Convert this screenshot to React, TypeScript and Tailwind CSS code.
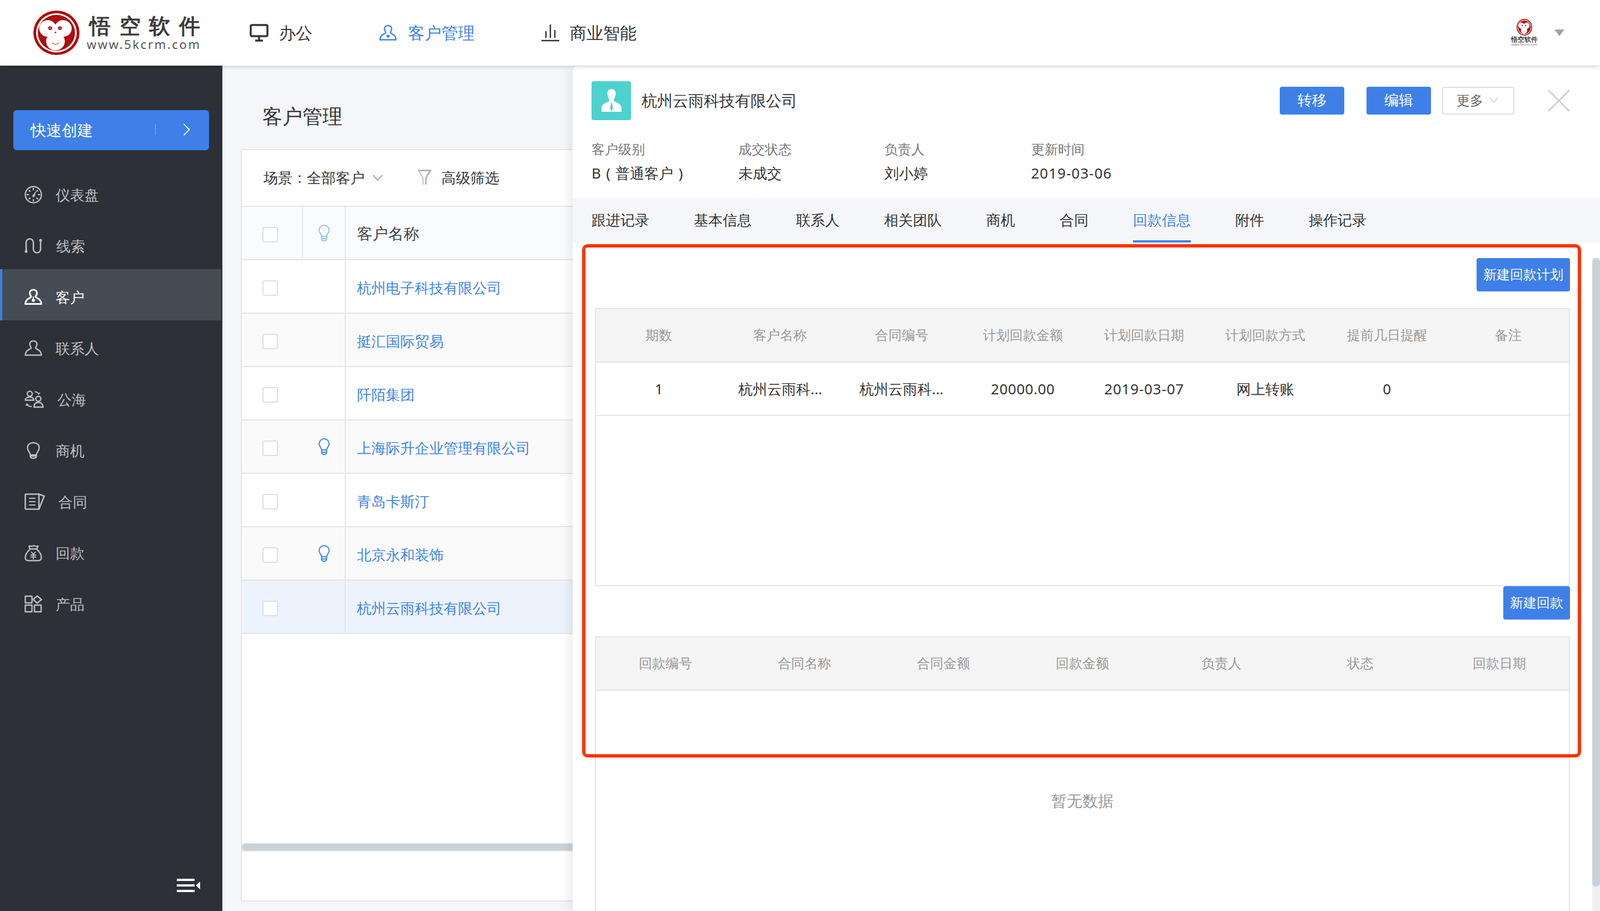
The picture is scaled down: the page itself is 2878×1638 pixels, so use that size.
import type { ReactNode } from "react";

const customers = [
  { name: "杭州电子科技有限公司", bulb: false },
  { name: "挺汇国际贸易", bulb: false },
  { name: "阡陌集团", bulb: false },
  { name: "上海际升企业管理有限公司", bulb: true },
  { name: "青岛卡斯汀", bulb: false },
  { name: "北京永和装饰", bulb: true },
  { name: "杭州云雨科技有限公司", bulb: false },
];

const planHeads = ["期数", "客户名称", "合同编号", "计划回款金额", "计划回款日期", "计划回款方式", "提前几日提醒", "备注"];
const planRow = ["1", "杭州云雨科...", "杭州云雨科...", "20000.00", "2019-03-07", "网上转账", "0", ""];
const backHeads = ["回款编号", "合同名称", "合同金额", "回款金额", "负责人", "状态", "回款日期"];
const tabs = ["跟进记录", "基本信息", "联系人", "相关团队", "商机", "合同", "回款信息", "附件", "操作记录"];
const infos = [
  ["客户级别", "B ( 普通客户 )"],
  ["成交状态", "未成交"],
  ["负责人", "刘小婷"],
  ["更新时间", "2019-03-06"],
];

// 悟空 logo
function Monkey({ className }: { className: string }) {
  return (
    <svg viewBox="42 27 236 236" className={className} preserveAspectRatio="none">
      <circle cx="160" cy="145" r="118" fill="#b00d0d" />
      <circle cx="160" cy="145" r="104" fill="#fff" />
      <circle cx="160" cy="145" r="95" fill="#b00d0d" />
      <circle cx="116" cy="122" r="44" fill="#fff" />
      <circle cx="194" cy="122" r="44" fill="#fff" />
      <circle cx="155" cy="190" r="48" fill="#fff" />
      <rect x="125" y="110" width="60" height="60" fill="#fff" />
      <circle cx="128" cy="120" r="10" fill="#b00d0d" />
      <circle cx="178" cy="120" r="10" fill="#b00d0d" />
      <circle cx="128" cy="120" r="3" fill="#fff" />
      <circle cx="178" cy="120" r="3" fill="#fff" />
      <circle cx="155" cy="143" r="4" fill="#b00d0d" />
      <path d="M138 198 Q155 214 172 198" fill="none" stroke="#b00d0d" strokeWidth="3" />
    </svg>
  );
}

function Svg({ w, h, children, className }: { w: number; h: number; children: ReactNode; className?: string }) {
  return (
    <svg
      viewBox={`0 0 ${w} ${h}`}
      width={w}
      height={h}
      fill="none"
      stroke="currentColor"
      strokeWidth="2.4"
      strokeLinecap="round"
      strokeLinejoin="round"
      className={className ?? "shrink-0"}
    >
      {children}
    </svg>
  );
}

const personPath =
  "M16 3c-4 0-6.500 2.600-6.500 6 0 2.300 1 3.600 2 5 .6.900.5 2-.5 2.800C8 19 2 20 1.500 28.500h29C30 20 24 19 21 16.800c-1-.8-1.100-1.900-.5-2.800 1-1.400 2-2.700 2-5 0-3.400-2.500-6-6.500-6Z";

const icons: Record<string, ReactNode> = {
  仪表盘: (
    <Svg w={32} h={32}>
      <circle cx="16" cy="16" r="14.500" />
      <path d="M16 5v2M16 25v2M5 16h2M25 16h2M8.500 8.500l1.400 1.400M22.100 22.100l1.400 1.400M8.500 23.500l1.400-1.400M23.500 8.500l-1.400 1.400" />
      <path d="M14 18.500 20.500 10.500 17.500 20Z" fill="currentColor" strokeWidth="1" />
    </Svg>
  ),
  线索: (
    <Svg w={33} h={32} className="shrink-0">
      <path d="M3 26V10a6.500 6.500 0 0 1 13 0v12a6.500 6.500 0 0 0 13 0V6" strokeWidth="2.600" />
      <circle cx="3" cy="26" r="2.600" fill="currentColor" stroke="none" />
      <circle cx="29" cy="6" r="2.600" fill="currentColor" stroke="none" />
    </Svg>
  ),
  客户: (
    <Svg w={32} h={32}>
      <path d={personPath} strokeWidth="3" />
      <circle cx="16" cy="22" r="2.800" fill="currentColor" stroke="none" />
      <path d="M16 16v4" />
    </Svg>
  ),
  联系人: (
    <Svg w={32} h={32}>
      <path d={personPath} />
    </Svg>
  ),
  公海: (
    <Svg w={35} h={32}>
      <circle cx="9.500" cy="6" r="4.500" />
      <path d="M1.500 17.500c0-3.600 3.500-5.500 8-5.500s7 1.500 7.500 5.500Z" />
      <circle cx="25" cy="15" r="4.500" />
      <path d="M17 30c.3-6 3.500-8.500 8-8.500s8 2.500 8.500 8.500Z" />
      <path d="M19 2.500c3 0 5.500 1.500 6.500 4M24 4.500l1.500 2 2-1.500" strokeWidth="2" />
      <path d="M12.500 29c-4 0-7-1-8.500-4.500M3 27l1-2.500 2.500 1" strokeWidth="2" />
    </Svg>
  ),
  商机: (
    <Svg w={32} h={32}>
      <path d="M10.500 24c0-5-5-6.500-5-13 0-5.500 4.500-9 10.500-9s10.500 3.500 10.500 9c0 6.500-5 8-5 13Z" />
      <path d="M10.500 24v2c0 2.500 2 4 5.500 4s5.500-1.500 5.500-4v-2M11 26h10" />
    </Svg>
  ),
  合同: (
    <Svg w={37} h={32}>
      <path d="M26 2.500H3A1.500 1.500 0 0 0 1.500 4v24A1.500 1.500 0 0 0 3 29.500h23" strokeWidth="2.600" />
      <path d="M26 2.500 35.500 6 26 29.500Z" strokeWidth="2.600" />
      <path d="M9 10h10M9 16h10M9 22h10" strokeWidth="2" />
    </Svg>
  ),
  回款: (
    <Svg w={32} h={32}>
      <path d="M10 9 8 4.500c2-1.500 3.500-.5 5-.5s3-1.500 5.500-.5 3.500.5 6 .5L22 9" />
      <path d="M10.500 9h11C26 13 30.500 18 30.500 24c0 4-2 6-5.500 6H7c-3.500 0-5.500-2-5.500-6 0-6 4.500-11 9-15Z" />
      <path d="M12.500 14.500 16 19l3.500-4.500M11.500 20h9M11.500 23.500h9M16 19v8" strokeWidth="2" />
    </Svg>
  ),
  产品: (
    <Svg w={32} h={32}>
      <rect x="1.500" y="2" width="12" height="12" />
      <path d="M23 1.500 30.500 8 23 14.500 15.500 8Z" />
      <rect x="1.500" y="18" width="12" height="12" />
      <rect x="18" y="18" width="12" height="12" />
    </Svg>
  ),
};

const menus = ["仪表盘", "线索", "客户", "联系人", "公海", "商机", "合同", "回款", "产品"];

function Bulb({ className }: { className: string }) {
  return (
    <svg viewBox="0 0 20 30" width="20" height="30" fill="none" stroke="currentColor" strokeWidth="2" className={className}>
      <path d="M5.500 21c0-4-4.500-6-4.500-11C1 5 5 1 10 1s9 4 9 9c0 5-4.500 7-4.500 11Z" />
      <path d="M5.500 21v4c0 2.500 2 4 4.500 4s4.500-1.500 4.500-4v-4M6 25h8" />
    </svg>
  );
}

function CheckBox() {
  return <div className="w-[28px] h-[28px] bg-white border-2 border-[#dcdfe6] rounded-[4px]" />;
}

function Chevron({ className }: { className: string }) {
  return (
    <svg viewBox="0 0 20 12" fill="none" stroke="currentColor" strokeWidth="1.500" className={className}>
      <path d="M1 1l9 10 9-10" />
    </svg>
  );
}

function BlueButton({ children, className }: { children: ReactNode; className: string }) {
  return (
    <button className={`bg-[#3e80e8] text-white rounded-[4px] text-center pb-[3px] ${className}`}>{children}</button>
  );
}

export default function App() {
  return (
    <div className="relative w-[2878px] h-[1638px] overflow-hidden flex flex-col bg-[#f5f6f9] text-[#333] font-['Noto_Sans_CJK_SC',sans-serif]">
      {/* 顶部导航 */}
      <header className="relative z-20 h-[118px] shrink-0 bg-white flex items-center pl-[60px] pr-[64px] shadow-[0_2px_8px_rgba(0,0,0,0.16)]">
        <Monkey className="w-[83px] h-[80px] shrink-0" />
        <div className="ml-[13px] w-[210px] mb-[4px] flex flex-col">
          <span className="text-[38px] leading-[44px] font-bold tracking-[15.500px] text-[#3a3a3a] pl-[5px] whitespace-nowrap">悟空软件</span>
          <span className="text-[22px] leading-[24px] tracking-[2.600px] text-[#555] font-['Liberation_Sans',sans-serif] whitespace-nowrap">www.5kcrm.com</span>
        </div>
        <nav className="ml-[83px] flex items-center gap-[120px] text-[30px] leading-[40px]">
          <div className="flex items-center gap-[19px]">
            <svg viewBox="0 0 34 32" width="34" height="32" fill="none" stroke="currentColor" strokeWidth="3.500">
              <rect x="2" y="2" width="30" height="20" rx="2" />
              <path d="M17 22v7M10 30h14" />
            </svg>
            <span>办公</span>
          </div>
          <div className="flex items-center gap-[20px] text-[#3e84e9]">
            <Svg w={32} h={32}>
              <path d={personPath} />
              <circle cx="16" cy="22" r="2.800" fill="currentColor" stroke="none" />
            </Svg>
            <span>客户管理</span>
          </div>
          <div className="flex items-center gap-[19px]">
            <svg viewBox="0 0 32 32" width="32" height="32" fill="none" stroke="currentColor" strokeWidth="2.400">
              <path d="M0 30h32M8 25v-12M16 25V1M24 25V11" />
            </svg>
            <span>商业智能</span>
          </div>
        </nav>
        <div className="ml-auto flex items-center gap-[23px]">
          <div className="w-[62px] h-[50px] flex flex-col items-center overflow-hidden">
            <Monkey className="w-[28px] h-[30px] shrink-0" />
            <span className="text-[12px] leading-[13px] font-bold text-[#444] whitespace-nowrap">悟空软件</span>
            <span className="text-[6px] leading-[7px] text-[#777] font-['Liberation_Sans',sans-serif] whitespace-nowrap">www.5kcrm.com</span>
          </div>
          <div className="w-0 h-0 border-l-[9px] border-r-[9px] border-t-[12px] border-l-transparent border-r-transparent border-t-[#a3a3a3]" />
        </div>
      </header>

      <div className="flex flex-1 min-h-0">
        {/* 左侧菜单 */}
        <aside className="w-[400px] shrink-0 bg-[#2d3037] flex flex-col pt-[80px]">
          <div className="mx-[24px] h-[72px] rounded-[6px] bg-[#3e80e8] text-white flex items-center pl-[31px] pb-[2px] text-[28px]">
            <span>快速创建</span>
            <span className="ml-[112px] w-px h-[20px] bg-white/40" />
            <svg viewBox="0 0 13 22" width="13" height="22" fill="none" stroke="currentColor" strokeWidth="1.800" className="ml-[49px]">
              <path d="M1.500 1 11.500 11 1.500 21" />
            </svg>
          </div>
          <ul className="mt-[30px]">
            {menus.map((m) =>
              m === "客户" ? (
                <li key={m} className="h-[92px] mr-[2px] border-l-4 border-[#3e80e8] bg-[#454c56] text-white flex items-center gap-[24px] pl-[40px] pt-[8px] text-[26px]">
                  {icons[m]}
                  <span>{m}</span>
                </li>
              ) : (
                <li key={m} className="h-[92px] border-l-4 border-transparent text-[#bebec0] flex items-center gap-[24px] pl-[40px] pt-[8px] text-[26px]">
                  {icons[m]}
                  <span>{m}</span>
                </li>
              )
            )}
          </ul>
          <svg viewBox="0 0 42 24" width="42" height="24" className="mt-auto mb-[34px] ml-[318px] text-white" fill="currentColor">
            <rect x="0" y="0" width="32" height="4" />
            <rect x="0" y="10" width="32" height="4" />
            <rect x="0" y="20" width="32" height="4" />
            <path d="M42 5v14l-8-7Z" />
          </svg>
        </aside>

        {/* 客户管理 列表 */}
        <main className="flex-1 min-w-0 flex flex-col pl-[33px] pb-[17px]">
          <h1 className="h-[150px] shrink-0 pl-[39px] pt-[32px] flex items-center text-[36px] font-normal">客户管理</h1>
          <div className="flex-1 flex flex-col bg-white border-2 border-[#e6e6e6] rounded-[4px]">
            <div className="h-[102px] shrink-0 border-b-2 border-[#e6e6e6] pl-[39px] pb-[2px] flex items-center text-[26px]">
              <span>
                场景<span className="inline-block w-[26px] text-center">:</span>全部客户
              </span>
              <Chevron className="ml-[14px] w-[19px] h-[11px] text-[#888]" />
              <svg viewBox="0 0 25 28" width="25" height="28" fill="none" strokeWidth="3" className="ml-[62px]">
                <path d="M1.500 1.500h22L15 15v12" stroke="#b5b5b5" />
                <path d="M1.500 1.500 10 15v12" stroke="#b5b5b5" strokeWidth="1.500" />
              </svg>
              <span className="ml-[18px]">高级筛选</span>
            </div>
            <div className="h-[96px] shrink-0 flex border-b-2 border-[#e6e6e6] bg-[#f9fbfe]">
              <div className="w-[110px] shrink-0 border-r-2 border-[#e6e6e6] pl-[37px] pt-[6px] flex items-center">
                <CheckBox />
              </div>
              <div className="w-[77px] shrink-0 border-r-2 border-[#e6e6e6] flex items-center justify-center">
                <Bulb className="text-[#8fc1f5]" />
              </div>
              <div className="pl-[20px] flex items-center text-[28px] text-[#444]">客户名称</div>
            </div>
            {customers.map((c, i) => (
              <div
                key={c.name}
                className={`h-[96px] shrink-0 flex border-b-2 border-[#e6e6e6] ${i === 6 ? "bg-[#ecf3fc]" : i % 2 === 1 ? "bg-[#fafafa]" : "bg-white"}`}
              >
                <div className="w-[110px] shrink-0 pl-[37px] pt-[6px] flex items-center">
                  <CheckBox />
                </div>
                <div className="w-[77px] shrink-0 border-r-2 border-[#e6e6e6] flex items-center justify-center">
                  {c.bulb && <Bulb className="text-[#3e84e9]" />}
                </div>
                <div className="pl-[20px] pt-[4px] flex items-center text-[26px] text-[#3e84e9]">{c.name}</div>
              </div>
            ))}
            <div className="mt-auto mb-[88px] h-[16px] shrink-0 bg-[#f0f2f6] border-b-[2px] border-[#e6e6e6] pt-[2px]">
              <div className="h-[12px] bg-[#c9d2da] rounded-l-full" />
            </div>
          </div>
        </main>
      </div>

      {/* 右侧详情 */}
      <section className="absolute z-10 left-[1030px] top-[119px] right-0 bottom-0 bg-white rounded-l-[8px] shadow-[-8px_0_16px_rgba(0,0,0,0.07)] overflow-hidden flex flex-col">
        <div className="pl-[34px] pr-[54px] pt-[27px]">
          <div className="flex items-center h-[70px]">
            <div className="w-[71px] h-[70px] bg-[#4dd2d0] rounded-[4px] flex items-center justify-center">
              <svg viewBox="0 0 40 44" width="40" height="44" fill="#fff">
                <path d="M20 1c-5 0-7.500 3.500-7.500 8 0 4 1.500 8 3 10 .7 1 .7 3-.5 4C11 26 2 27 2 36v6h36v-6c0-9-9-10-13-13-1.200-1-1.200-3-.5-4 1.500-2 3-6 3-10 0-4.500-2.500-8-7.500-8Z" />
                <path d="M19 26h2l1.500 10L20 41l-2.500-5Z" fill="#4dd2d0" />
              </svg>
            </div>
            <span className="ml-[19px] pb-[3px] text-[28px]">杭州云雨科技有限公司</span>
            <div className="ml-auto flex items-center">
              <BlueButton className="w-[116px] h-[50px] text-[26px]">转移</BlueButton>
              <BlueButton className="ml-[40px] w-[116px] h-[50px] text-[26px]">编辑</BlueButton>
              <div className="ml-[20px] w-[130px] h-[50px] border-2 border-[#dcdfe6] rounded-[4px] pl-[24px] pb-[2px] flex items-center text-[24px] text-[#666]">
                更多
                <Chevron className="ml-[10px] w-[18px] h-[10px] text-[#c0c4cc]" />
              </div>
              <svg viewBox="0 0 40 40" width="40" height="40" fill="none" stroke="#cfcfcf" strokeWidth="3" className="ml-[60px]">
                <path d="M1 1 39 39M39 1 1 39" />
              </svg>
            </div>
          </div>
          <div className="flex mt-[34px] mb-[20px]">
            {infos.map(([label, value], i) => (
              <div key={label} className="w-[263.500px]">
                <div className="h-[36px] leading-[36px] text-[24px] text-[#777]">{label}</div>
                <div
                  className={`h-[50px] leading-[50px] text-[26px] text-[#333] ${i === 0 ? "[word-spacing:2.500px]" : ""} ${i === 3 ? "tracking-[1px]" : ""}`}
                >
                  {value}
                </div>
              </div>
            ))}
          </div>
        </div>

        <div className="h-[80px] shrink-0 bg-[#f5f6f9] pl-[34px] flex gap-[80px] text-[26px]">
          {tabs.map((t) =>
            t === "回款信息" ? (
              <div key={t} className="pt-[3px] flex items-center border-b-4 border-[#3e84e9] text-[#3e84e9]">
                {t}
              </div>
            ) : (
              <div key={t} className="pt-[3px] flex items-center border-b-4 border-transparent">
                {t}
              </div>
            )
          )}
        </div>

        <div className="flex-1 min-h-0 pl-[40px] pr-[54px] pt-[28px]">
          <div className="flex justify-end">
            <BlueButton className="w-[168px] h-[60px] text-[24px]">新建回款计划</BlueButton>
          </div>

          <div className="mt-[30px] h-[500px] border-2 border-[#e6e6e6]">
            <div className="h-[96px] pl-[4px] pb-[2px] grid grid-cols-8 items-center bg-[#f5f5f5] border-b-2 border-[#e6e6e6] text-[24px] text-[#999] text-center">
              {planHeads.map((h) => (
                <div key={h}>{h}</div>
              ))}
            </div>
            <div className="h-[96px] pl-[4px] grid grid-cols-8 items-center border-b-2 border-[#e6e6e6] text-[26px] text-center">
              {planRow.map((v, i) => (
                <div key={i} className={i === 3 ? "tracking-[0.500px]" : i === 4 ? "tracking-[0.800px]" : ""}>
                  {v}
                </div>
              ))}
            </div>
          </div>

          <div className="flex justify-end">
            <BlueButton className="w-[120px] h-[60px] text-[24px]">新建回款</BlueButton>
          </div>

          <div className="mt-[30px] h-[600px] border-2 border-[#e6e6e6]">
            <div className="h-[96px] pb-[2px] grid grid-cols-7 items-center bg-[#f5f5f5] border-b-2 border-[#e6e6e6] text-[24px] text-[#999] text-center">
              {backHeads.map((h) => (
                <div key={h}>{h}</div>
              ))}
            </div>
            <div className="pt-[177px] text-center text-[28px] leading-[40px] text-[#999]">暂无数据</div>
          </div>
        </div>

        <div className="absolute right-0 top-[345px] bottom-0 w-[14px] bg-[#f1f1f1]">
          <div className="h-[1130px] bg-[#c9d2da] rounded-full" />
        </div>
      </section>

      {/* 标注框 */}
      <div className="absolute z-30 left-[1047px] top-[439px] w-[1797px] h-[923px] border-[6px] border-[#ff3300] rounded-[10px] pointer-events-none" />
    </div>
  );
}
